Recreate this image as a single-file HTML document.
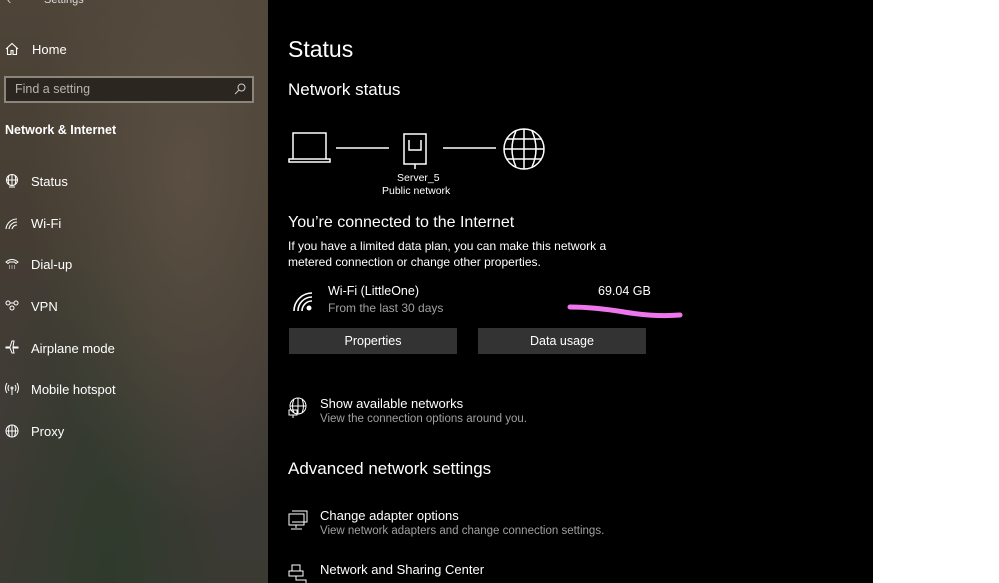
<!DOCTYPE html>
<html><head><meta charset="utf-8"><style>
*{margin:0;padding:0;box-sizing:border-box}
body{width:999px;height:583px;overflow:hidden;background:#fff;font-family:"Liberation Sans",sans-serif;position:relative}
#side{position:absolute;left:0;top:0;width:268px;height:583px;background:radial-gradient(ellipse at 70% 30%,#5a4f42 0%,transparent 60%),radial-gradient(ellipse at 40% 100%,#2f3a2c 0%,transparent 50%),linear-gradient(180deg,#4e4438 0%,#453d33 40%,#3f3b36 70%,#3a3a33 100%)}
#main{position:absolute;left:268px;top:0;width:605px;height:583px;background:#000;color:#fff}
.t{position:absolute;white-space:nowrap}
.s{color:#fff;font-size:13px}
.ni{position:absolute;left:5px;width:14px;height:14px}
.m{font-size:13px}
.g{color:#a0a0a0;font-size:11.5px}
.btn{position:absolute;top:328px;width:168px;height:26px;background:#333;color:#fff;font-size:12.5px;text-align:center;line-height:26px}
</style></head><body>
<div id="side">
<div class="t s" style="left:44px;top:-6px;font-size:11px;color:#ddd">Settings</div>
<div class="t s" style="left:7px;top:-8px;color:#ccc">‹</div>
<svg class="ni" style="top:42px" viewBox="0 0 14 14" fill="none" stroke="#fff" stroke-width="1.1"><path d="M1 7L7 1.5 13 7M2.5 6v6.5h3.5v-4h2v4h3.5V6"/></svg>
<div class="t s" style="left:32px;top:42px">Home</div>
<div style="position:absolute;left:4px;top:76px;width:250px;height:27px;border:2px solid #8b857c;background:#2c2620"></div>
<div class="t" style="left:15px;top:82px;font-size:12.5px;color:#b8b2aa">Find a setting</div>
<svg style="position:absolute;left:234px;top:83px" width="12" height="12" viewBox="0 0 12 12" fill="none" stroke="#ccc"><circle cx="7.5" cy="4.5" r="3.5"/><path d="M5 7L1 11"/></svg>
<div class="t s" style="left:5px;top:123px;font-weight:bold;font-size:12.5px">Network &amp; Internet</div>
<svg class="ni" style="top:174px" viewBox="0 0 14 14" fill="none" stroke="#fff"><circle cx="7" cy="6" r="5.5"/><path d="M1.5 6h11M7 .5v11M4 1.5q-1.5 4.5 0 9M10 1.5q1.5 4.5 0 9M4 13h6"/></svg>
<div class="t s" style="left:31px;top:174px">Status</div>
<svg class="ni" style="top:216px" viewBox="0 0 14 14" fill="none" stroke="#fff" stroke-width="1.1"><path d="M1 13A11 11 0 0 1 12 3M4 13A8 8 0 0 1 12 6M7 13A5 5 0 0 1 12 9"/></svg>
<div class="t s" style="left:31px;top:216px">Wi-Fi</div>
<svg class="ni" style="top:257px" viewBox="0 0 14 14" fill="none" stroke="#fff"><path d="M1 5q6-5 12 0l-2 1.5-1.5-1.5h-5L3 6.5z"/><path d="M4 9h1M6.5 9h1M9 9h1M4 11h1M6.5 11h1M9 11h1"/></svg>
<div class="t s" style="left:31px;top:257px">Dial-up</div>
<svg class="ni" style="top:299px" viewBox="0 0 14 14" fill="none" stroke="#fff"><circle cx="3" cy="4" r="2"/><circle cx="11" cy="4" r="2"/><circle cx="7" cy="9" r="2"/><path d="M5 4h4"/></svg>
<div class="t s" style="left:31px;top:299px">VPN</div>
<svg class="ni" style="top:340px" viewBox="0 0 14 14" fill="none" stroke="#fff"><path d="M1 7h4L7 1h2L8 7h5L13 8H8l1 5H7L5 8H1z"/></svg>
<div class="t s" style="left:31px;top:341px">Airplane mode</div>
<svg class="ni" style="top:382px" viewBox="0 0 14 14" fill="none" stroke="#fff"><circle cx="7" cy="6" r="1"/><path d="M7 7v6M4 3q-2 3 0 6M10 3q2 3 0 6M2 1q-3 5 0 10M12 1q3 5 0 10"/></svg>
<div class="t s" style="left:31px;top:382px">Mobile hotspot</div>
<svg class="ni" style="top:424px" viewBox="0 0 14 14" fill="none" stroke="#fff"><circle cx="7" cy="7" r="6"/><path d="M1 7h12M7 1v12M4.5 1.5q-2 5.5 0 11M9.5 1.5q2 5.5 0 11"/></svg>
<div class="t s" style="left:31px;top:424px">Proxy</div>
</div>
<div id="main">
<div class="t" style="left:20px;top:36px;font-size:23px">Status</div>
<div class="t" style="left:20px;top:80px;font-size:17px">Network status</div>
<svg style="position:absolute;left:20px;top:128px" width="270" height="44" viewBox="0 0 270 44" fill="none" stroke="#fff" stroke-width="1.5">
<path d="M5 5h33v26H5zM1 31h41v3H1z"/>
<path d="M48 20h53M155 20h53"/>
<path d="M116 6h22v30h-22zM121 12v10h12V12M127 36v5"/>
<circle cx="236" cy="21" r="20"/><path d="M216 21h40M236 1v40M228 3q-8 18 0 36M244 3q8 18 0 36M219 11h34M219 31h34"/>
</svg>
<div class="t" style="left:129px;top:172px;font-size:10.5px">Server_5</div>
<div class="t" style="left:114px;top:185px;font-size:10.5px">Public network</div>
<div class="t" style="left:20px;top:214px;font-size:16px">You’re connected to the Internet</div>
<div class="t" style="left:20px;top:238px;font-size:12px;line-height:16px">If you have a limited data plan, you can make this network a<br>metered connection or change other properties.</div>
<svg style="position:absolute;left:24px;top:290px" width="22" height="22" viewBox="0 0 22 22" fill="none" stroke="#fff" stroke-width="1.6"><path d="M2 21A18 18 0 0 1 20 3M6 21A14 14 0 0 1 20 7M10 21A10 10 0 0 1 20 11"/><circle cx="17" cy="18" r="2.5" fill="#fff" stroke="none"/></svg>
<div class="t" style="left:60px;top:284px;font-size:12.5px">Wi-Fi (LittleOne)</div>
<div class="t g" style="left:60px;top:301px;font-size:12px">From the last 30 days</div>
<div class="t" style="left:330px;top:284px;font-size:12.5px">69.04 GB</div>
<svg style="position:absolute;left:296px;top:298px" width="122" height="24" viewBox="0 0 122 24" fill="none"><path d="M6 9Q30 9 60 14T116 17" stroke="#ee77ee" stroke-width="5" stroke-linecap="round"/></svg>
<div class="btn" style="left:21px">Properties</div>
<div class="btn" style="left:210px">Data usage</div>
<svg style="position:absolute;left:20px;top:397px" width="20" height="22" viewBox="0 0 20 22" fill="none" stroke="#fff"><circle cx="10" cy="9" r="8"/><path d="M2 9h16M10 1v16M6 2q-3 7 0 14M14 2q3 7 0 14M1 13h8v5H1zM5 18v3"/></svg>
<div class="t m" style="left:52px;top:396px">Show available networks</div>
<div class="t g" style="left:52px;top:413px">View the connection options around you.</div>
<div class="t" style="left:20px;top:459px;font-size:17px">Advanced network settings</div>
<svg style="position:absolute;left:20px;top:510px" width="20" height="22" viewBox="0 0 20 22" fill="none" stroke="#fff"><path d="M4 1h15v11H4M1 4h15v11H1zM8 15v3M3 19h11"/></svg>
<div class="t m" style="left:52px;top:508px">Change adapter options</div>
<div class="t g" style="left:52px;top:525px">View network adapters and change connection settings.</div>
<svg style="position:absolute;left:20px;top:564px" width="20" height="19" viewBox="0 0 20 19" fill="none" stroke="#fff"><path d="M4 1h8v6H4zM1 7h14v5H1zM8 12v4h10v3"/></svg>
<div class="t m" style="left:52px;top:562px">Network and Sharing Center</div>
</div>
</body></html>
